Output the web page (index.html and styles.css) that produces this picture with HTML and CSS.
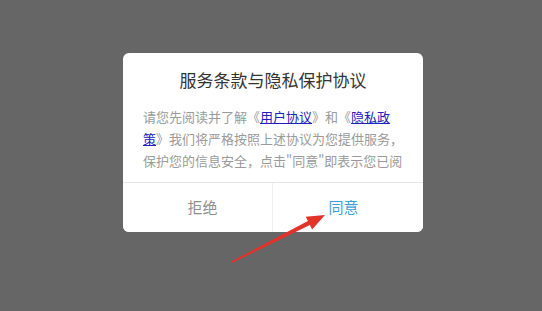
FILE: index.html
```html
<!DOCTYPE html>
<html lang="zh-CN">

<head>
    <meta charset="UTF-8">
    <meta name="viewport" content="width=device-width, initial-scale=1.0">
    <title>服务条款与隐私保护协议</title>
    <link rel="stylesheet" href="styles.css">
</head>

<body>
    <main class="mask">
        <section class="dialog">
            <div class="dialog-title">服务条款与隐私保护协议</div>
            <div class="dialog-body">
                <p>请您先阅读并了解《<a href="#">用户协议</a>》和《<a href="#">隐私政策</a>》我们将严格按照上述协议为您提供服务，保护您的信息安全，点击"同意"即表示您已阅</p>
            </div>
            <div class="dialog-buttons">
                <button class="btn-refuse">拒绝</button>
                <button class="btn-agree">同意</button>
            </div>
        </section>
    </main>
    <!-- annotation arrow drawn over the screenshot -->
    <svg class="arrow" width="542" height="311" viewBox="0 0 542 311">
        <polygon points="231.6,261.3 307.9,221.1 305.7,216.8 325,215 312.1,229.4 309.9,225.1 232.4,262.7" fill="#e2332b" />
    </svg>
</body>

</html>
```

FILE: styles.css
```css
:root {
    --gray-text: #9a9a9a;
    --line: #e6e6e6;
}

body {
    margin: 0;
    padding: 0;
    width: 542px;
    height: 311px;
    overflow: hidden;
    background: #666666;
    font-family: "Noto Sans CJK SC", "Noto Sans", sans-serif;
}

.mask {
    padding-top: 53px;
    display: flex;
    justify-content: center;
}

.dialog {
    width: 300px;
    margin-left: 4px;
    background: #fff;
    border-radius: 6px;
    overflow: hidden;
}

.dialog-title {
    padding-top: 14px;
    line-height: 26px;
    font-size: 17px;
    color: #333;
    text-align: center;
}

.dialog-body {
    margin: 13px 17px 10px 20px;
    height: 66px;
}

.dialog-body p {
    margin: 0;
    font-size: 13px;
    line-height: 22px;
    color: var(--gray-text);
}

.dialog-body a {
    color: #2020bd;
    text-decoration: underline;
}

.dialog-buttons {
    display: flex;
    border-top: 1px solid var(--line);
}

button {
    flex: 0 0 150px;
    box-sizing: border-box;
    height: 49px;
    padding: 0 0 3px;
    border: none;
    background: #fff;
    font-family: inherit;
    font-size: 15px;
    cursor: pointer;
}

.btn-refuse {
    color: #8f8f8f;
    border-right: 1px solid #f0f0f0;
    padding-left: 10px;
}

.btn-agree {
    color: #3d9fd6;
    padding-right: 9px;
}

.arrow {
    position: absolute;
    top: 0;
    left: 0;
}
```
